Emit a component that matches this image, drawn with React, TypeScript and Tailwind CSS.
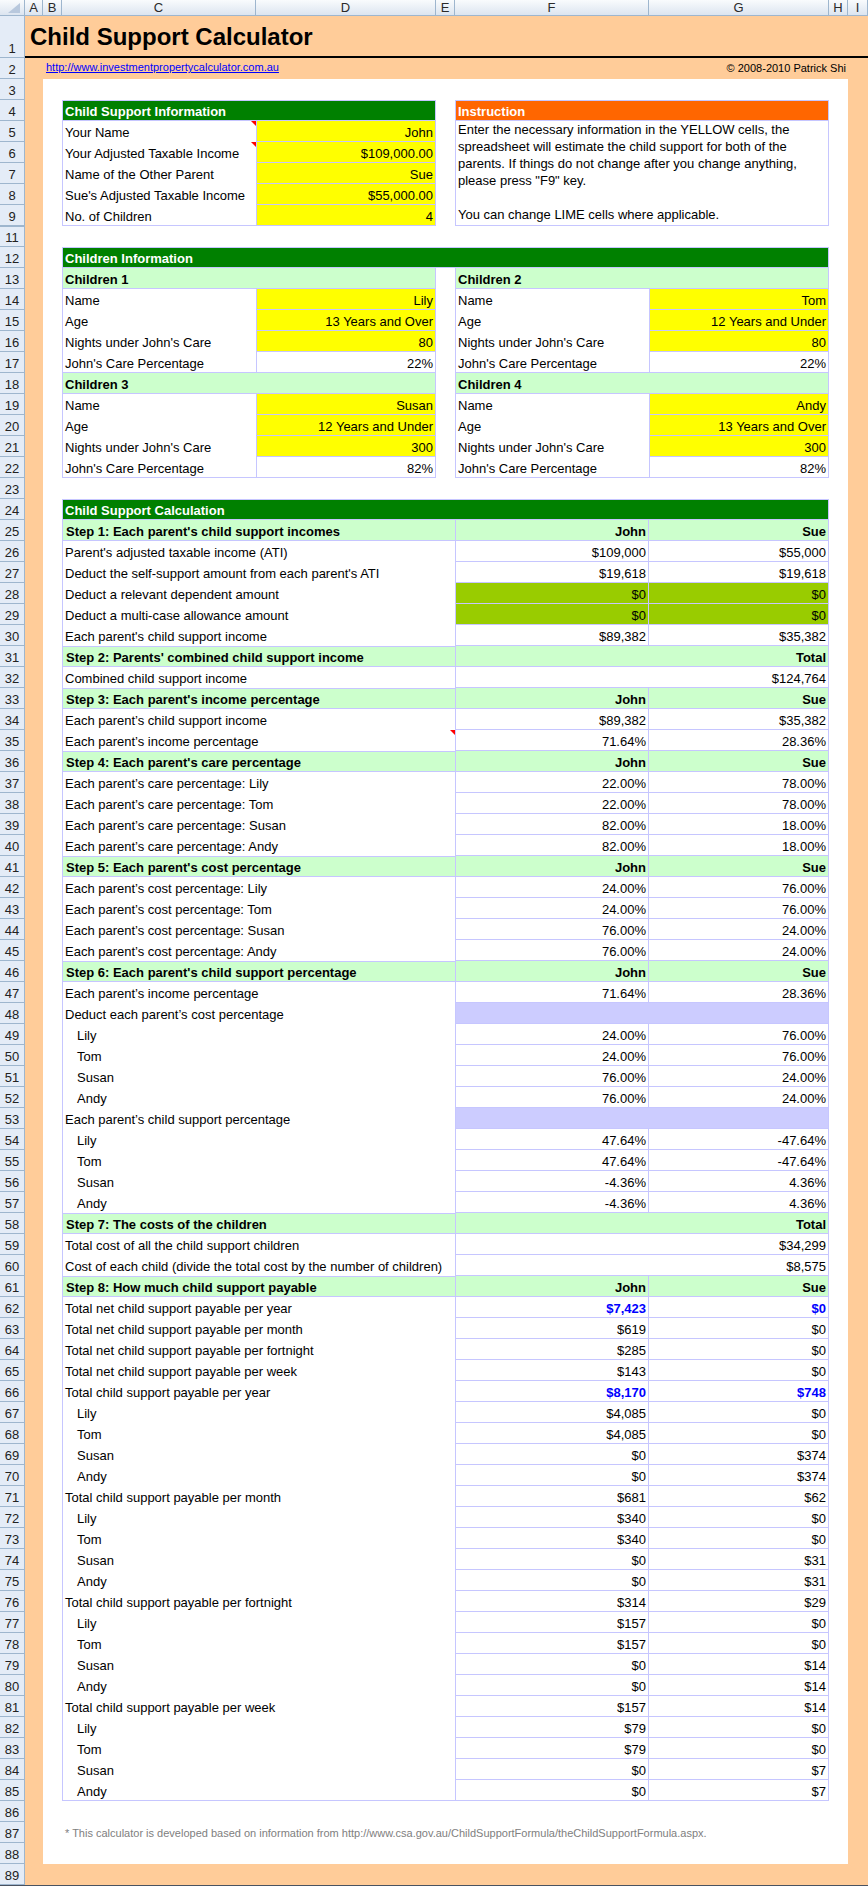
import React from "react";

const BD = "border-[#c6c6ff]";
const ROWGRID = "grid grid-cols-[19px_194px_180px_19px_194px_180px_19px] h-[21px]";
const TXT = "flex items-end text-[13px] leading-[15px] whitespace-nowrap overflow-hidden";

function cx(...a: (string | false | undefined | null)[]) {
  return a.filter(Boolean).join(" ");
}

function Tri() {
  return (
    <span className="absolute top-0 right-0 w-0 h-0 border-t-[5px] border-l-[5px] border-t-[#ff0000] border-l-transparent" />
  );
}

const COLS: [string, string][] = [
  ["A", "w-[18px]"],
  ["B", "w-[19px]"],
  ["C", "w-[194px]"],
  ["D", "w-[180px]"],
  ["E", "w-[19px]"],
  ["F", "w-[194px]"],
  ["G", "w-[180px]"],
  ["H", "w-[19px]"],
  ["I", "w-[20px]"],
];

function ColHeader() {
  return (
    <div className="flex h-[16px] bg-[linear-gradient(to_bottom,#f9fbfd,#dce5f0)] border-b border-[#9eb6ce]">
      <div className="w-[25px] border-r border-[#9eb6ce] relative">
        <svg width="24" height="15" className="absolute left-0 top-0">
          <polygon points="20,3 20,13 8,13" fill="#b8c8dd" />
        </svg>
      </div>
      {COLS.map(([l, w]) => (
        <div
          key={l}
          className={cx(w, "border-r border-[#9eb6ce] flex items-center justify-center text-[13px] leading-[15px] text-[#2a2a2a]")}
        >
          {l}
        </div>
      ))}
    </div>
  );
}

const ROWNUMS: number[] = [];
for (let i = 1; i <= 89; i++) if (i !== 10) ROWNUMS.push(i);

function RowHeaders() {
  return (
    <div className="w-[25px] flex flex-col">
      {ROWNUMS.map((n) => (
        <div
          key={n}
          className={cx(
            n === 1 ? "h-[42px]" : "h-[21px]",
            "bg-[#e4ecf7] border-r border-b border-[#9eb6ce] flex items-end justify-center pb-[1px] text-[13px] leading-[15px] text-[#222]",
            n === 11 && "shadow-[inset_0_1px_0_#9eb6ce]"
          )}
        >
          {n}
        </div>
      ))}
    </div>
  );
}

const INFO: [string, string, boolean][] = [
  ["Your Name", "John", true],
  ["Your Adjusted Taxable Income", "$109,000.00", true],
  ["Name of the Other Parent", "Sue", false],
  ["Sue's Adjusted Taxable Income", "$55,000.00", false],
  ["No. of Children", "4", false],
];

type Kid = { title: string; name: string; age: string; nights: string; pct: string };
const KIDS: [Kid, Kid][] = [
  [
    { title: "Children 1", name: "Lily", age: "13 Years and Over", nights: "80", pct: "22%" },
    { title: "Children 2", name: "Tom", age: "12 Years and Under", nights: "80", pct: "22%" },
  ],
  [
    { title: "Children 3", name: "Susan", age: "12 Years and Under", nights: "300", pct: "82%" },
    { title: "Children 4", name: "Andy", age: "13 Years and Over", nights: "300", pct: "82%" },
  ],
];

type CalcRow =
  | { k: "step"; label: string; total?: boolean; first?: boolean }
  | { k: "val"; label: string; f: string; g: string; indent?: boolean; lime?: boolean; blue?: boolean; tri?: boolean }
  | { k: "merged"; label: string; v: string; peri?: boolean };

const CALC: CalcRow[] = [
  { k: "step", label: "Step 1: Each parent's child support incomes", first: true },
  { k: "val", label: "Parent's adjusted taxable income (ATI)", f: "$109,000", g: "$55,000" },
  { k: "val", label: "Deduct the self-support amount from each parent's ATI", f: "$19,618", g: "$19,618" },
  { k: "val", label: "Deduct a relevant dependent amount", f: "$0", g: "$0", lime: true },
  { k: "val", label: "Deduct a multi-case allowance amount", f: "$0", g: "$0", lime: true },
  { k: "val", label: "Each parent's child support income", f: "$89,382", g: "$35,382" },
  { k: "step", label: "Step 2: Parents' combined child support income", total: true },
  { k: "merged", label: "Combined child support income", v: "$124,764" },
  { k: "step", label: "Step 3: Each parent's income percentage" },
  { k: "val", label: "Each parent\u2019s child support income", f: "$89,382", g: "$35,382" },
  { k: "val", label: "Each parent\u2019s income percentage", f: "71.64%", g: "28.36%", tri: true },
  { k: "step", label: "Step 4: Each parent's care percentage" },
  { k: "val", label: "Each parent\u2019s care percentage: Lily", f: "22.00%", g: "78.00%" },
  { k: "val", label: "Each parent\u2019s care percentage: Tom", f: "22.00%", g: "78.00%" },
  { k: "val", label: "Each parent\u2019s care percentage: Susan", f: "82.00%", g: "18.00%" },
  { k: "val", label: "Each parent\u2019s care percentage: Andy", f: "82.00%", g: "18.00%" },
  { k: "step", label: "Step 5: Each parent's cost percentage" },
  { k: "val", label: "Each parent\u2019s cost percentage: Lily", f: "24.00%", g: "76.00%" },
  { k: "val", label: "Each parent\u2019s cost percentage: Tom", f: "24.00%", g: "76.00%" },
  { k: "val", label: "Each parent\u2019s cost percentage: Susan", f: "76.00%", g: "24.00%" },
  { k: "val", label: "Each parent\u2019s cost percentage: Andy", f: "76.00%", g: "24.00%" },
  { k: "step", label: "Step 6: Each parent's child support percentage" },
  { k: "val", label: "Each parent\u2019s income percentage", f: "71.64%", g: "28.36%" },
  { k: "merged", label: "Deduct each parent\u2019s cost percentage", v: "", peri: true },
  { k: "val", label: "Lily", f: "24.00%", g: "76.00%", indent: true },
  { k: "val", label: "Tom", f: "24.00%", g: "76.00%", indent: true },
  { k: "val", label: "Susan", f: "76.00%", g: "24.00%", indent: true },
  { k: "val", label: "Andy", f: "76.00%", g: "24.00%", indent: true },
  { k: "merged", label: "Each parent\u2019s child support percentage", v: "", peri: true },
  { k: "val", label: "Lily", f: "47.64%", g: "-47.64%", indent: true },
  { k: "val", label: "Tom", f: "47.64%", g: "-47.64%", indent: true },
  { k: "val", label: "Susan", f: "-4.36%", g: "4.36%", indent: true },
  { k: "val", label: "Andy", f: "-4.36%", g: "4.36%", indent: true },
  { k: "step", label: "Step 7: The costs of the children", total: true },
  { k: "merged", label: "Total cost of all the child support children", v: "$34,299" },
  { k: "merged", label: "Cost of each child (divide the total cost by the number of children)", v: "$8,575" },
  { k: "step", label: "Step 8: How much child support payable" },
  { k: "val", label: "Total net child support payable per year", f: "$7,423", g: "$0", blue: true },
  { k: "val", label: "Total net child support payable per month", f: "$619", g: "$0" },
  { k: "val", label: "Total net child support payable per fortnight", f: "$285", g: "$0" },
  { k: "val", label: "Total net child support payable per week", f: "$143", g: "$0" },
  { k: "val", label: "Total child support payable per year", f: "$8,170", g: "$748", blue: true },
  { k: "val", label: "Lily", f: "$4,085", g: "$0", indent: true },
  { k: "val", label: "Tom", f: "$4,085", g: "$0", indent: true },
  { k: "val", label: "Susan", f: "$0", g: "$374", indent: true },
  { k: "val", label: "Andy", f: "$0", g: "$374", indent: true },
  { k: "val", label: "Total child support payable per month", f: "$681", g: "$62" },
  { k: "val", label: "Lily", f: "$340", g: "$0", indent: true },
  { k: "val", label: "Tom", f: "$340", g: "$0", indent: true },
  { k: "val", label: "Susan", f: "$0", g: "$31", indent: true },
  { k: "val", label: "Andy", f: "$0", g: "$31", indent: true },
  { k: "val", label: "Total child support payable per fortnight", f: "$314", g: "$29" },
  { k: "val", label: "Lily", f: "$157", g: "$0", indent: true },
  { k: "val", label: "Tom", f: "$157", g: "$0", indent: true },
  { k: "val", label: "Susan", f: "$0", g: "$14", indent: true },
  { k: "val", label: "Andy", f: "$0", g: "$14", indent: true },
  { k: "val", label: "Total child support payable per week", f: "$157", g: "$14" },
  { k: "val", label: "Lily", f: "$79", g: "$0", indent: true },
  { k: "val", label: "Tom", f: "$79", g: "$0", indent: true },
  { k: "val", label: "Susan", f: "$0", g: "$7", indent: true },
  { k: "val", label: "Andy", f: "$0", g: "$7", indent: true },
];

function Empty() {
  return <div className="h-[21px]" />;
}

function CalcLine({ r, last }: { r: CalcRow; last: boolean }) {
  if (r.k === "step") {
    return (
      <div className={ROWGRID}>
        <div
          className={cx(
            "col-start-2 col-span-3 bg-[#ccffcc] border-l border-b font-bold pl-[3px] pb-[1px]",
            !r.first && "border-t",
            BD,
            TXT
          )}
        >
          {r.label}
        </div>
        {r.total ? (
          <div className={cx("col-start-5 col-span-2 bg-[#ccffcc] border-l border-r border-b font-bold justify-end pr-[2px] pb-[1px]", BD, TXT)}>
            Total
          </div>
        ) : (
          <>
            <div className={cx("col-start-5 bg-[#ccffcc] border-l border-r border-b font-bold justify-end pr-[2px] pb-[1px]", BD, TXT)}>
              John
            </div>
            <div className={cx("col-start-6 bg-[#ccffcc] border-r border-b font-bold justify-end pr-[2px] pb-[1px]", BD, TXT)}>
              Sue
            </div>
          </>
        )}
      </div>
    );
  }
  const label = (
    <div
      className={cx(
        "col-start-2 col-span-3 border-l relative",
        r.k === "val" && r.indent ? "pl-[14px]" : "pl-[2px]",
        last ? "border-b pb-[1px]" : "pb-[2px]",
        BD,
        TXT
      )}
    >
      {r.label}
      {r.k === "val" && r.tri && <Tri />}
    </div>
  );
  if (r.k === "merged") {
    return (
      <div className={ROWGRID}>
        {label}
        <div
          className={cx(
            "col-start-5 col-span-2 border-l border-r border-b justify-end pr-[2px] pb-[1px]",
            r.peri && "bg-[#ccccff]",
            BD,
            TXT
          )}
        >
          {r.v}
        </div>
      </div>
    );
  }
  return (
    <div className={ROWGRID}>
      {label}
      <div
        className={cx(
          "col-start-5 border-l border-r border-b justify-end pr-[2px] pb-[1px]",
          r.lime && "bg-[#99cc00]",
          r.blue && "text-[#0000ff] font-bold",
          BD,
          TXT
        )}
      >
        {r.f}
      </div>
      <div
        className={cx(
          "col-start-6 border-r border-b justify-end pr-[2px] pb-[1px]",
          r.lime && "bg-[#99cc00]",
          r.blue && "text-[#0000ff] font-bold",
          BD,
          TXT
        )}
      >
        {r.g}
      </div>
    </div>
  );
}

function KidRows({ pair }: { pair: [Kid, Kid] }) {
  const [a, b] = pair;
  const lines: [string, (k: Kid) => string, boolean][] = [
    ["Name", (k) => k.name, true],
    ["Age", (k) => k.age, true],
    ["Nights under John's Care", (k) => k.nights, true],
    ["John's Care Percentage", (k) => k.pct, false],
  ];
  return (
    <>
      <div className={ROWGRID}>
        <div className={cx("col-start-2 col-span-2 bg-[#ccffcc] border-l border-r border-b font-bold pl-[2px] pb-[1px]", BD, TXT)}>
          {a.title}
        </div>
        <div className={cx("col-start-5 col-span-2 bg-[#ccffcc] border-l border-r border-b font-bold pl-[2px] pb-[1px]", BD, TXT)}>
          {b.title}
        </div>
      </div>
      {lines.map(([lab, fn, yellow], i) => {
        const last = i === lines.length - 1;
        return (
          <div key={lab} className={ROWGRID}>
            <div className={cx("col-start-2 border-l pl-[2px]", last ? "border-b pb-[1px]" : "pb-[2px]", BD, TXT)}>{lab}</div>
            <div
              className={cx(
                "col-start-3 border-l border-r border-b justify-end pr-[2px] pb-[1px]",
                yellow && "bg-[#ffff00]",
                BD,
                TXT
              )}
            >
              {fn(a)}
            </div>
            <div className={cx("col-start-5 border-l pl-[2px]", last ? "border-b pb-[1px]" : "pb-[2px]", BD, TXT)}>{lab}</div>
            <div
              className={cx(
                "col-start-6 border-l border-r border-b justify-end pr-[2px] pb-[1px]",
                yellow && "bg-[#ffff00]",
                BD,
                TXT
              )}
            >
              {fn(b)}
            </div>
          </div>
        );
      })}
    </>
  );
}

function WhiteArea() {
  return (
    <div className="w-[805px] bg-white flex flex-col">
      {/* row 3 */}
      <Empty />
      {/* rows 4-9 */}
      <div className="flex h-[126px]">
        <div className="w-[19px]" />
        <div className="w-[374px] flex flex-col">
          <div className={cx("h-[21px] bg-[#008000] border text-white font-bold pl-[2px] pb-[1px]", BD, TXT)}>
            Child Support Information
          </div>
          {INFO.map(([lab, val, tri], i) => (
            <div key={lab} className="grid grid-cols-[194px_180px] h-[21px]">
              <div className={cx("border-l pl-[2px] relative", i === INFO.length - 1 ? "border-b pb-[1px]" : "pb-[2px]", BD, TXT)}>
                {lab}
                {tri && <Tri />}
              </div>
              <div className={cx("bg-[#ffff00] border-l border-r border-b justify-end pr-[2px] pb-[1px]", BD, TXT)}>{val}</div>
            </div>
          ))}
        </div>
        <div className="w-[19px]" />
        <div className="w-[374px] flex flex-col">
          <div className={cx("h-[21px] bg-[#ff6600] border text-white font-bold pl-[2px] pb-[1px]", BD, TXT)}>Instruction</div>
          <div className={cx("h-[105px] border-l border-r border-b pl-[2px] text-[13px] leading-[17px] whitespace-nowrap", BD)}>
            <div>Enter the necessary information in the YELLOW cells, the</div>
            <div>spreadsheet will estimate the child support for both of the</div>
            <div>parents. If things do not change after you change anything,</div>
            <div>please press "F9" key.</div>
            <div className="h-[17px]" />
            <div>You can change LIME cells where applicable.</div>
          </div>
        </div>
        <div className="w-[19px]" />
      </div>
      {/* row 11 */}
      <Empty />
      {/* row 12 */}
      <div className={ROWGRID}>
        <div className={cx("col-start-2 col-span-5 bg-[#008000] border text-white font-bold pl-[2px] pb-[1px]", BD, TXT)}>
          Children Information
        </div>
      </div>
      {/* rows 13-22 */}
      {KIDS.map((p, i) => (
        <KidRows key={i} pair={p} />
      ))}
      {/* row 23 */}
      <Empty />
      {/* row 24 */}
      <div className={ROWGRID}>
        <div className={cx("col-start-2 col-span-5 bg-[#008000] border text-white font-bold pl-[2px] pb-[1px]", BD, TXT)}>
          Child Support Calculation
        </div>
      </div>
      {/* rows 25-85 */}
      {CALC.map((r, i) => (
        <CalcLine key={i} r={r} last={i === CALC.length - 1} />
      ))}
      {/* row 86 */}
      <Empty />
      {/* row 87 */}
      <div className="h-[21px] flex items-end pl-[22px] pb-[3px] text-[11px] leading-[13px] text-[#808080] whitespace-nowrap">
        * This calculator is developed based on information from http://www.csa.gov.au/ChildSupportFormula/theChildSupportFormula.aspx.
      </div>
      {/* row 88 */}
      <Empty />
    </div>
  );
}

export default function App() {
  return (
    <div className="w-[868px] [font-family:'Liberation_Sans',Arial,sans-serif] text-black bg-white">
      <ColHeader />
      <div className="flex">
        <RowHeaders />
        <div className="w-[843px] flex flex-col">
          {/* row 1 */}
          <div className="h-[42px] bg-[#ffcc99] border-b-2 border-black flex items-end pl-[5px] pb-[7px]">
            <span className="text-[24px] leading-[24px] font-bold">Child Support Calculator</span>
          </div>
          {/* row 2 */}
          <div className="h-[21px] bg-[#ffcc99] flex justify-between pl-[21px] pr-[22px] text-[11px] leading-[13px]">
            <span className="pt-[3px] text-[#0000ff] underline">http://www.investmentpropertycalculator.com.au</span>
            <span className="pt-[4px]">© 2008-2010 Patrick Shi</span>
          </div>
          {/* rows 3-88 */}
          <div className="flex">
            <div className="w-[18px] bg-[#ffcc99]" />
            <WhiteArea />
            <div className="w-[20px] bg-[#ffcc99]" />
          </div>
          {/* row 89 */}
          <div className="h-[21px] bg-[#ffcc99]" />
        </div>
      </div>
      <div className="h-[2px] bg-[#4a5260]" />
    </div>
  );
}
